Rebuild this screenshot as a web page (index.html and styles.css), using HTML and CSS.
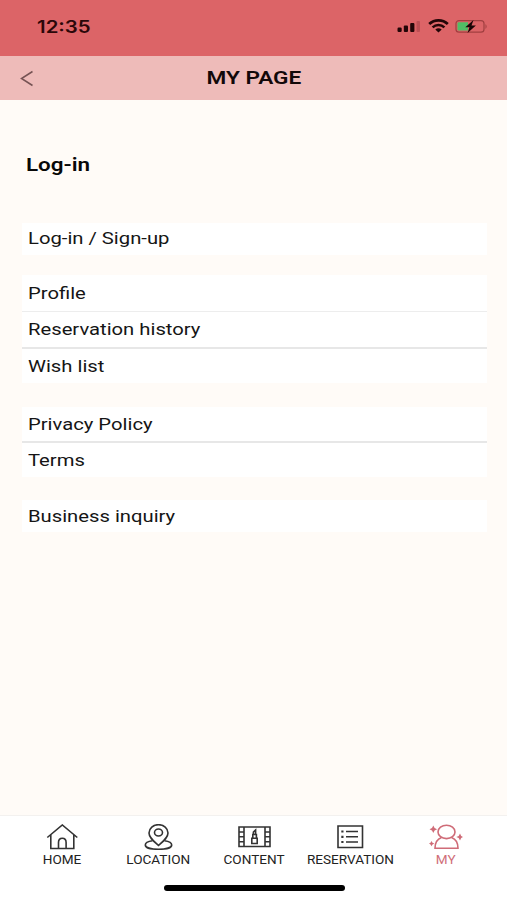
FILE: index.html
```html
<!DOCTYPE html>
<html lang="en">
<head>
	<meta charset="UTF-8">
	<meta name="viewport" content="width=device-width">
	<title>MY PAGE</title>
	<link rel="stylesheet" href="styles.css">
</head>
<body>
	<div class="status">
		<span class="time">12:35</span>
		<svg class="status-icons" width="92" height="16" viewBox="0 0 92 16">
			<rect x="0.5" y="9.5" width="4.2" height="4.5" rx="1.2" fill="#220507"/>
			<rect x="6.8" y="7.5" width="4.2" height="6.5" rx="1" fill="#220507"/>
			<rect x="13.2" y="5" width="4.2" height="9" rx="1" fill="#220507"/>
			<rect x="19.5" y="3" width="3.5" height="11" rx="1" fill="#bd4f54"/>
			<g fill="none" stroke="#220507" stroke-width="2.7">
				<path d="M32.2 6.1a13.5 13.5 0 0 1 18.6 0"/>
				<path d="M35.6 9.4a8.500 8.500 0 0 1 11.800 0" stroke-width="2.5"/>
			</g>
			<path d="M38.3 11.6a5 5 0 0 1 6.4 0L41.5 14.5z" fill="#220507"/>
			<rect x="59" y="2.6" width="28" height="11.6" rx="3" fill="none" stroke="#a13f40" stroke-width="1.2"/>
			<path d="M61.8 4.2H71v8.4h-9.2q-1.3 0-1.3-1.3V5.500q0-1.300 1.300-1.300z" fill="#50bd65"/>
			<path d="M88.5 6v5q2.3-2.5 0-5z" fill="#a13f40"/>
			<path d="M76.5 2l-8.2 7.3h4.2l-2 5.700 8.400-7.500h-4.400z" fill="#190506"/>
		</svg>
	</div>
	<div class="header">
		<svg class="back" width="14" height="18" viewBox="0 0 14 18">
			<path d="M12.5 2.5L1.5 9.5l11 7" fill="none" stroke="#765354" stroke-width="1.5"/>
		</svg>
		<h1><span>MY PAGE</span></h1>
	</div>
	<div class="main">
		<h2><span>Log-in</span></h2>
		<ul class="list login">
			<li><span>Log-in / Sign-up</span></li>
		</ul>
		<ul class="list user">
			<li><span>Profile</span></li>
			<li><span>Reservation history</span></li>
			<li><span>Wish list</span></li>
		</ul>
		<ul class="list policy">
			<li><span>Privacy Policy</span></li>
			<li><span>Terms</span></li>
		</ul>
		<ul class="list inquiry">
			<li><span>Business inquiry</span></li>
		</ul>
	</div>
	<div class="nav">
		<div class="item">
			<svg width="34" height="28" viewBox="0 0 34 28">
				<path d="M2.3 13.500L17.300 1 32.300 13.500M5.800 11v13.500h23V11M13.500 24.500v-6q0-4.300 3.800-4.300t3.800 4.300v6"/>
			</svg>
			<span>HOME</span>
		</div>
		<div class="item">
			<svg width="34" height="28" viewBox="0 0 34 28">
				<path d="M17.500 21.500C12.500 17 8 13.500 8 9a9.500 8.300 0 0 1 19 0c0 4.500-4.500 8-9.500 12.500z"/>
				<ellipse cx="17.5" cy="8.500" rx="4" ry="3.500"/>
				<path d="M11.500 16.700C7 17.300 4.300 19 4.300 20.900c0 2.600 5.500 4.400 13.200 4.400s13.200-1.800 13.200-4.400c0-1.900-2.700-3.600-7.200-4.200"/>
			</svg>
			<span>LOCATION</span>
		</div>
		<div class="item">
			<svg width="34" height="28" viewBox="0 0 34 28">
				<path d="M2 3h31v19.500H2zM7 3v19.500M28 3v19.500M2 8h5M2 12.800h5M2 17.700h5M28 8h5M28 12.800h5M28 17.700h5"/>
				<path d="M14.800 19.500v-5.300h5.400v5.300zM15.800 14.200V10.500h3.600v3.700M16.400 10.500V8L18.600 6v4.500"/>
			</svg>
			<span>CONTENT</span>
		</div>
		<div class="item">
			<svg width="34" height="28" viewBox="0 0 34 28">
				<path d="M5 2h24.500v21.500H5zM13 7.500h12M13 12.800h12M13 18h12"/>
				<path d="M8.300 7.500h2.200M8.300 12.800h2.200M8.300 18h2.200" stroke-width="2.2"/>
			</svg>
			<span>RESERVATION</span>
		</div>
		<div class="item active">
			<svg width="34" height="28" viewBox="0 0 34 28">
				<ellipse cx="17.500" cy="7.900" rx="8.500" ry="6.700"/>
				<path d="M12.500 13.400C8 15 6 18.500 6 24.300h23c0-5.800-2-9.300-6.500-10.900"/>
				<path class="spark" d="M4.300 1.500l1.300 2.500 2.500 1.200-2.500 1.200-1.300 2.500L3 6.400.500 5.200 3 4zM31 9.500l1.200 2.500 1.800 1-1.800 1-1.200 2.500-1.300-2.500-2.400-1 2.400-1zM2.500 17l1 1.700 1.800.9-1.800.9-1 1.700-1-1.700-1.500-.9 1.500-.9z"/>
			</svg>
			<span>MY</span>
		</div>
	</div>
	<div class="home-bar"></div>
</body>
</html>
```
FILE: styles.css
```css
* {
	box-sizing: border-box;
}
body {
	display: flex;
	flex-direction: column;
	height: 900px;
	margin: 0;
	background: #fffbf7;
	color: #151515;
	font-family: Roboto, "Liberation Sans", sans-serif;
}
span {
	display: inline-block;
	white-space: nowrap;
}
.status {
	display: flex;
	justify-content: space-between;
	height: 56px;
	padding: 16px 18px 0 37px;
	background: #dc6467;
}
.time {
	height: 22px;
	line-height: 22px;
	color: #2b0709;
	font-family: Inter, sans-serif;
	font-size: 17px;
	font-weight: 600;
	transform: scaleX(1.2);
	transform-origin: left;
}
.status-icons {
	margin-top: 2px;
}
.header {
	display: grid;
	grid-template-columns: 60px 1fr 60px;
	align-items: center;
	height: 44px;
	background: #eebbb9;
}
.back {
	margin-left: 20px;
}
h1 {
	margin: 0;
	color: #120809;
	font-size: 19px;
	font-weight: 600;
	line-height: 22px;
	text-align: center;
}
h1 span {
	transform: scaleX(1.19);
}
.main {
	flex: 1;
	padding: 52px 20px 0 22px;
}
h2 {
	height: 26px;
	margin: 0 0 45px 4px;
	color: #080808;
	font-size: 19px;
	font-weight: 600;
	line-height: 26px;
}
h2 span {
	transform: scaleX(1.18);
	transform-origin: left;
}
.list {
	margin: 0;
	padding: 0;
	background: #fff;
	list-style: none;
}
.list li {
	height: 36px;
	padding-left: 6px;
	font-size: 17px;
	line-height: 36px;
}
.list li + li {
	border-top: 1px solid #ededed;
	line-height: 34px;
}
.list span {
	transform: scaleX(1.19);
	transform-origin: left;
}
.login li,
.inquiry li {
	height: 32px;
	line-height: 31px;
}
.user {
	margin-top: 20px;
}
.list.user li:last-child {
	border-top: 2px solid #e7e7e7;
	line-height: 35px;
}
.policy {
	margin: 24px 0 23px;
}
.policy li:first-child {
	height: 34px;
	line-height: 34px;
}
.list.policy li + li {
	border-top: 2px solid #e7e7e7;
}
.inquiry li {
	line-height: 33px;
}
.nav {
	display: flex;
	height: 70px;
	padding: 8px 13px 0 14px;
	border-top: 1px solid #f3f1ef;
	background: #fff;
}
.item {
	display: flex;
	flex: 1;
	flex-direction: column;
	align-items: center;
	color: #222;
}
.item svg {
	fill: none;
	stroke: #333;
	stroke-width: 1.6;
}
.item span {
	font-size: 12px;
	line-height: 16px;
	transform: scaleX(1.13);
}
.active {
	color: #d06f7a;
}
.active svg {
	stroke: #cf6c78;
}
.active .spark {
	fill: #cf6c78;
	stroke: none;
}
.home-bar {
	height: 15px;
	background: #fff;
}
.home-bar::before {
	display: block;
	width: 181px;
	height: 6px;
	margin: 0 auto 0 164px;
	border-radius: 3px;
	background: #000;
	content: "";
}
```
